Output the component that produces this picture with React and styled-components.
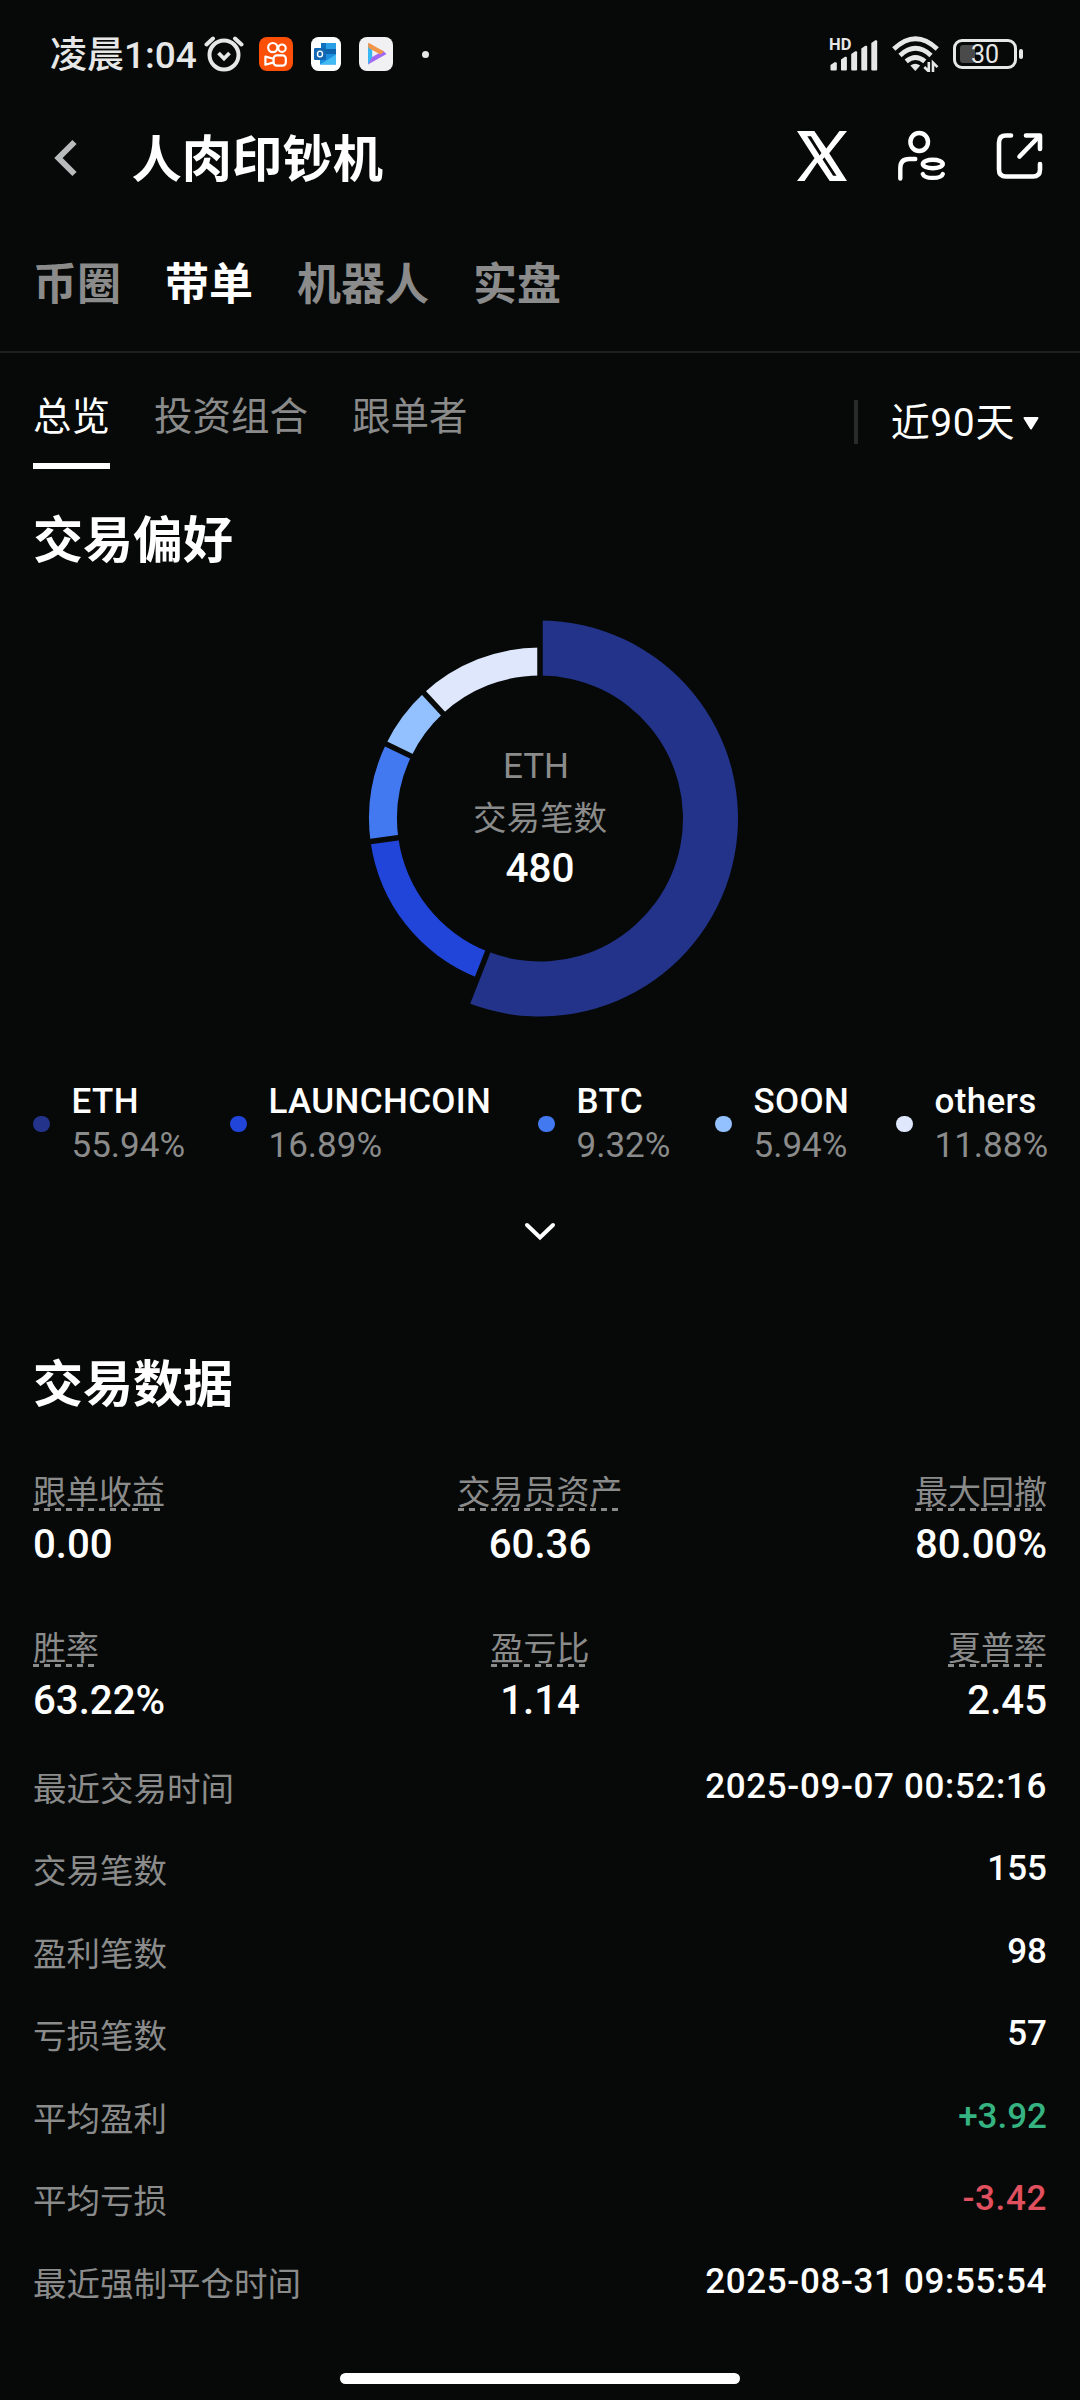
import React, { useState } from 'react';
import styled, { createGlobalStyle } from 'styled-components';

const slices = [
  { name: 'ETH', percent: 55.94, color: '#223389', active: true },
  { name: 'LAUNCHCOIN', percent: 16.89, color: '#2145d9' },
  { name: 'BTC', percent: 9.32, color: '#4279f0' },
  { name: 'SOON', percent: 5.94, color: '#93c0fe' },
  { name: 'others', percent: 11.88, color: '#dfe7fd' },
];

const stats = [
  { label: '跟单收益', value: '0.00' },
  { label: '交易员资产', value: '60.36' },
  { label: '最大回撤', value: '80.00%' },
  { label: '胜率', value: '63.22%' },
  { label: '盈亏比', value: '1.14' },
  { label: '夏普率', value: '2.45' },
];

const details = [
  { label: '最近交易时间', value: '2025-09-07 00:52:16' },
  { label: '交易笔数', value: '155' },
  { label: '盈利笔数', value: '98' },
  { label: '亏损笔数', value: '57' },
  { label: '平均盈利', value: '+3.92', color: '#35b380' },
  { label: '平均亏损', value: '-3.42', color: '#e0505f' },
  { label: '最近强制平仓时间', value: '2025-08-31 09:55:54' },
];

const mainTabs = ['币圈', '带单', '机器人', '实盘'];
const subTabs = ['总览', '投资组合', '跟单者'];

const CENTER = 200.5;
const INNER = 143;

const point = (angle, r) => {
  const rad = ((angle - 90) * Math.PI) / 180;
  return `${(200 + r * Math.cos(rad)).toFixed(2)} ${(CENTER + r * Math.sin(rad)).toFixed(2)}`;
};

const ringPath = (start, end, outer) => {
  const large = end - start > 180 ? 1 : 0;
  return `M${point(start, outer)} A${outer} ${outer} 0 ${large} 1 ${point(end, outer)} L${point(end, INNER)} A${INNER} ${INNER} 0 ${large} 0 ${point(start, INNER)} Z`;
};

const DonutChart = () => {
  const total = slices.reduce((sum, s) => sum + s.percent, 0);
  let angle = 0;
  const arcs = slices.map((s) => {
    const start = angle;
    angle += (s.percent / total) * 360;
    return { ...s, start, end: angle };
  });

  return (
    <svg width="400" height="400" viewBox="0 0 400 400">
      {arcs.map((a) => (
        <path key={a.name} d={ringPath(a.start, a.end, a.active ? 198 : 171)} fill={a.color} />
      ))}
      {arcs.map((a) => (
        <path
          key={a.name}
          d={`M${point(a.start, 138)} L${point(a.start, 202)}`}
          stroke="#060908"
          strokeWidth="5.5"
        />
      ))}
    </svg>
  );
};

const AlarmIcon = () => (
  <svg width="40" height="38" viewBox="0 0 40 38" fill="none" stroke="#e6e7e6" strokeLinecap="round">
    <circle cx="20" cy="20" r="14.5" strokeWidth="4" />
    <path d="M14.5 18l5.5 5.5 5.5-5.5" strokeWidth="3.8" strokeLinecap="butt" />
    <path d="M2.5 9.5l6.5-6M37.5 9.5L31 3.5" strokeWidth="4" />
  </svg>
);

const KuaishouIcon = () => (
  <svg width="34" height="34" viewBox="0 0 34 34">
    <rect width="34" height="34" rx="8" fill="#fc4f08" />
    <g fill="none" stroke="#fff" strokeWidth="2.2" strokeLinejoin="round">
      <circle cx="13.8" cy="10.6" r="4.6" />
      <circle cx="23" cy="11.2" r="3.7" />
      <rect x="14.6" y="18.3" width="12.2" height="10.3" rx="3.2" />
      <path d="M14.6 21.8l-8.2-2.2v8.2l8.2-2.4" />
    </g>
  </svg>
);

const OutlookIcon = () => (
  <svg width="30" height="34" viewBox="0 0 30 34">
    <rect width="30" height="34" rx="7.5" fill="#fdfefe" />
    <rect x="10" y="6" width="15" height="11" fill="#1071bd" />
    <rect x="15" y="6" width="10" height="6" fill="#2b9fe6" />
    <rect x="15" y="12" width="10" height="5" fill="#0e63ad" />
    <path d="M9 17h16v10.5H9z" fill="#1a8fe0" />
    <path d="M9 27.5l16-10v10z" fill="#42baf2" />
    <rect x="3" y="11" width="12" height="12" rx="1.2" fill="#1468b3" />
    <ellipse cx="9" cy="17" rx="2.5" ry="2.9" fill="none" stroke="#fff" strokeWidth="1.4" />
  </svg>
);

const VideoIcon = () => (
  <svg width="34" height="34" viewBox="0 0 34 34">
    <rect width="34" height="34" rx="8" fill="#f1f1f3" />
    <path d="M9 6.5L13.2 11v11.5L9 27.5z" fill="#38b6f1" />
    <path d="M9 27.5l4.2-7.5 7-4 3.5-2.5 3.8 3.5z" fill="#a268f2" />
    <path d="M9 6.5q.5-.8 1.5-.3L25 14.5l-3.5 3L9.500 11z" fill="#f2944a" />
  </svg>
);

const SignalIcon = () => (
  <svg width="48" height="31" viewBox="0 0 48 31" fill="#e6e7e6">
    <path d="M.5 25l4-2.8h1.3q1 0 1 1v6.4q0 1-1 1H1.5q-1 0-1-1z" />
    <path d="M11 19.5l4-2.8h.9q1 0 1 1v11.9q0 1-1 1H12q-1 0-1-1z" />
    <path d="M21.2 14l4-2.8h.9q1 0 1 1v17.4q0 1-1 1h-3.9q-1 0-1-1z" />
    <path d="M31.3 8.5l4-2.8h.9q1 0 1 1v22.9q0 1-1 1h-3.9q-1 0-1-1z" />
    <path d="M41.3 3l4-2.8h.9q1 0 1 1v28.4q0 1-1 1h-3.9q-1 0-1-1z" />
  </svg>
);

const WifiIcon = () => (
  <svg width="47" height="36" viewBox="0 0 47 36">
    <g fill="none" stroke="#e6e7e6" strokeWidth="4.8">
      <path d="M1.8 13Q23.5-7.5 45.2 13" />
      <path d="M8 19.4Q23.5 5.2 39 19.4" />
      <path d="M14.2 25.4Q23.5 17.5 32.8 25.4" />
    </g>
    <path d="M18.3 29.5q5-3.6 9.9 0L23.3 35z" fill="#e6e7e6" />
    <path d="M36.8 26v9.5l-4.5-4.5M41 36v-9.3l4.5 4.5" fill="none" stroke="#e6e7e6" strokeWidth="2.6" />
  </svg>
);

const BackIcon = () => (
  <svg width="24" height="38" viewBox="0 0 24 38" fill="none" stroke="#b9bcbd" strokeWidth="6">
    <path d="M20.5 3L4.5 19l16 16" />
  </svg>
);

const XIcon = () => (
  <svg width="50" height="50" viewBox="0 0 50 50">
    <path
      fill="#fff"
      fillRule="evenodd"
      d="M0 0h17.3l12 17.6L42.5 0H50L32.2 22.2 50 50H32.7L20.3 31.4 7.5 50H0l17.5-22.8zM10.3 5.2l12.4 19.200 1.700-2.400L14 5.2zM27.400 26.200l-1.800 2.300L36.100 44.8h3.5z"
    />
  </svg>
);

const TraderIcon = () => (
  <svg width="48" height="52" viewBox="0 0 48 52" fill="none" stroke="#fff" strokeWidth="4.4" strokeLinecap="round">
    <ellipse cx="21.2" cy="12" rx="8.8" ry="9" />
    <path d="M2.3 48.5V38q0-9 9-9h6" />
    <ellipse cx="34.8" cy="34" rx="10" ry="4.2" />
    <path d="M24.8 44c1.5 5.2 18.5 5.2 20 0" />
  </svg>
);

const ShareIcon = () => (
  <svg width="48" height="48" viewBox="0 0 48 48" fill="none" stroke="#fff" strokeWidth="4.6" strokeLinecap="round">
    <path d="M15 3.5H10q-7 0-7 7V37.5q0 7 7 7h27q7 0 7-7V32" />
    <path d="M30 3.5h14V17" strokeLinejoin="round" />
    <path d="M42.5 5L23.5 24.5" />
  </svg>
);

const App = () => {
  const [tab, setTab] = useState('带单');
  const [subTab, setSubTab] = useState('总览');

  return (
    <Screen lang="zh-CN">
      <GlobalStyle />
      <StatusBar>
        <Clock>凌晨1:04</Clock>
        <AlarmIcon />
        <Notifications>
          <KuaishouIcon />
          <OutlookIcon />
          <VideoIcon />
          <MoreDot />
        </Notifications>
        <Signal>
          <Hd>HD</Hd>
          <SignalIcon />
        </Signal>
        <WifiIcon />
        <Battery>
          <BatteryBody>
            <BatteryFill />
            <BatteryText>30</BatteryText>
          </BatteryBody>
          <BatteryTip />
        </Battery>
      </StatusBar>

      <Header>
        <Back>
          <BackIcon />
        </Back>
        <Title>人肉印钞机</Title>
        <Actions>
          <XIcon />
          <TraderIcon />
          <ShareIcon />
        </Actions>
      </Header>

      <MainTabs>
        {mainTabs.map((name) => (
          <MainTab key={name} $active={name === tab} onClick={() => setTab(name)}>
            {name}
          </MainTab>
        ))}
      </MainTabs>

      <SubTabs>
        {subTabs.map((name) => (
          <SubTab key={name} $active={name === subTab} onClick={() => setSubTab(name)}>
            {name}
          </SubTab>
        ))}
        <Range>
          近90天
          <svg width="16" height="14" viewBox="0 0 16 14">
            <path d="M1.5 2h13L8 12.5z" fill="#fff" stroke="#fff" strokeWidth="2" strokeLinejoin="round" />
          </svg>
        </Range>
      </SubTabs>

      <SectionTitle $top={42}>交易偏好</SectionTitle>
      <Chart>
        <DonutChart />
        <ChartCenter>
          <CenterName>ETH</CenterName>
          <CenterLabel>交易笔数</CenterLabel>
          <CenterValue>480</CenterValue>
        </ChartCenter>
      </Chart>

      <Legend>
        {slices.map((s) => (
          <LegendItem key={s.name}>
            <Dot $color={s.color} />
            <div>
              <LegendName>{s.name}</LegendName>
              <LegendPercent>{s.percent}%</LegendPercent>
            </div>
          </LegendItem>
        ))}
      </Legend>
      <Expand>
        <svg width="36" height="24" viewBox="0 0 36 24" fill="none" stroke="#fff" strokeWidth="4" strokeLinecap="round">
          <path d="M5 6l13 12.5L31 6" />
        </svg>
      </Expand>

      <SectionTitle $top={112}>交易数据</SectionTitle>
      <StatGrid>
        {stats.map((s) => (
          <Stat key={s.label}>
            <StatLabel>{s.label}</StatLabel>
            <StatValue>{s.value}</StatValue>
          </Stat>
        ))}
      </StatGrid>

      <DetailList>
        {details.map((d) => (
          <DetailRow key={d.label}>
            <DetailLabel>{d.label}</DetailLabel>
            <DetailValue $color={d.color} $wide={d.value.includes('-')}>
              {d.value}
            </DetailValue>
          </DetailRow>
        ))}
      </DetailList>
      <HomeIndicator />
    </Screen>
  );
};

const GlobalStyle = createGlobalStyle`
  body {
    margin: 0;
    background: #060908;
  }

  * {
    box-sizing: border-box;
  }

  svg {
    display: block;
    flex-shrink: 0;
  }
`;

const Screen = styled.div`
  width: 1080px;
  height: 2400px;
  overflow: hidden;
  background: #060908;
  color: #fff;
  font-family: Roboto, 'Noto Sans CJK SC', sans-serif;
  white-space: nowrap;
`;

const StatusBar = styled.div`
  display: flex;
  align-items: center;
  height: 108px;
  padding: 0 57px 0 50px;
  color: #e6e7e6;
`;

const Clock = styled.div`
  width: 154px;
  padding-bottom: 4px;
  font-size: 37px;
  font-weight: 500;
`;

const Notifications = styled.div`
  display: flex;
  align-items: center;
  gap: 18px;
  margin-left: 15px;
`;

const MoreDot = styled.div`
  width: 7px;
  height: 7px;
  margin-left: 11px;
  border-radius: 50%;
  background: #e6e7e6;
`;

const Signal = styled.div`
  position: relative;
  margin: 2px 14px 0 auto;
`;

const Hd = styled.span`
  position: absolute;
  top: -3px;
  left: -1px;
  font-size: 16.5px;
  font-weight: 700;
  line-height: 16px;
`;

const Battery = styled.div`
  display: flex;
  align-items: center;
  gap: 2px;
  margin-left: 14px;
`;

const BatteryBody = styled.div`
  position: relative;
  display: flex;
  align-items: center;
  justify-content: center;
  width: 64px;
  height: 30px;
  border: 3px solid #e6e7e6;
  border-radius: 9px;
`;

const BatteryFill = styled.div`
  position: absolute;
  top: 3px;
  left: 4px;
  width: 15px;
  height: 18px;
  border-radius: 3px;
  background: #494a49;
`;

const BatteryText = styled.span`
  position: relative;
  padding-top: 1px;
  font-size: 25px;
  line-height: 24px;
`;

const BatteryTip = styled.div`
  width: 4px;
  height: 10px;
  border-radius: 2px;
  background: #e6e7e6;
`;

const Header = styled.div`
  display: flex;
  align-items: center;
  height: 96px;
  padding: 0 36px 0 54px;
`;

const Back = styled.div`
  padding-top: 4px;
`;

const Title = styled.h1`
  margin: 8px 0 0 53.5px;
  font-size: 50.3px;
  font-weight: 700;
  line-height: 60px;
`;

const Actions = styled.div`
  display: flex;
  align-items: center;
  gap: 50.5px;
  margin-left: auto;
`;

const MainTabs = styled.div`
  display: flex;
  gap: 44px;
  height: 149px;
  padding: 55px 33px 0;
  border-bottom: 2px solid #1d1f1e;
`;

const MainTab = styled.div`
  color: ${({ $active }) => ($active ? '#fff' : '#8a8b8a')};
  font-size: 44px;
  font-weight: 700;
  line-height: 52px;
`;

const SubTabs = styled.div`
  display: flex;
  align-items: flex-start;
  gap: 44px;
  padding: 0 41px 0 33px;
`;

const SubTab = styled.div`
  padding: 38px 0 20px;
  border-bottom: 6px solid ${({ $active }) => ($active ? '#fff' : 'transparent')};
  color: ${({ $active }) => ($active ? '#fff' : '#8a8b8a')};
  font-size: 38.5px;
  line-height: 52px;
`;

const Range = styled.div`
  display: flex;
  align-items: center;
  gap: 8px;
  height: 44px;
  margin: 47px 0 0 auto;
  padding: 1px 0 0 33px;
  border-left: 4px solid #292b2a;
  font-size: 39px;
  line-height: 48px;
  letter-spacing: 0.6px;
`;

const SectionTitle = styled.h2`
  margin: ${({ $top }) => $top}px 0 0 33px;
  font-size: 50px;
  font-weight: 700;
  line-height: 60px;
`;

const Chart = styled.div`
  position: relative;
  width: 400px;
  height: 400px;
  margin: 47px auto 0;
`;

const ChartCenter = styled.div`
  position: absolute;
  inset: 0;
  display: flex;
  flex-direction: column;
  align-items: center;
  padding-top: 123px;
`;

const CenterName = styled.div`
  padding-right: 8px;
  color: #8a8b8a;
  font-size: 35px;
  line-height: 52px;
`;

const CenterLabel = styled.div`
  padding-bottom: 2px;
  color: #8a8b8a;
  font-size: 33.5px;
  line-height: 51px;
`;

const CenterValue = styled.div`
  font-size: 40.5px;
  font-weight: 500;
  line-height: 44px;
`;

const Legend = styled.div`
  display: grid;
  grid-template-columns: 197px 308px 177px 181px 1fr;
  margin: 62px 33px 0;
  font-size: 35px;
  line-height: 44px;
`;

const LegendItem = styled.div`
  display: flex;
  align-items: center;
  gap: 22px;
`;

const Dot = styled.div`
  flex-shrink: 0;
  width: 16.5px;
  height: 16.5px;
  border-radius: 50%;
  background: ${({ $color }) => $color};
`;

const LegendName = styled.div`
  font-weight: 500;
  letter-spacing: 0.35px;
`;

const LegendPercent = styled.div`
  color: #8a8b8a;
`;

const Expand = styled.div`
  display: flex;
  justify-content: center;
  margin-top: 51px;
`;

const StatGrid = styled.div`
  display: grid;
  grid-template-columns: repeat(3, 1fr);
  row-gap: 64.5px;
  margin: 60.5px 33px 0;
`;

const Stat = styled.div`
  display: flex;
  flex-direction: column;
  align-items: center;
  gap: 12.5px;

  &:nth-child(3n + 1) {
    align-items: flex-start;
  }

  &:nth-child(3n) {
    align-items: flex-end;
  }
`;

const StatLabel = styled.div`
  padding-bottom: 2px;
  color: #8a8b8a;
  font-size: 33px;
  line-height: 33px;
  background: repeating-linear-gradient(90deg, #8a8b8a 0 6px, transparent 6px 11px) bottom / 100% 3px no-repeat;
`;

const StatValue = styled.div`
  font-size: 40.2px;
  font-weight: 500;
  line-height: 44px;
`;

const DetailList = styled.div`
  margin: 25.5px 33px 0;
`;

const DetailRow = styled.div`
  display: flex;
  align-items: center;
  justify-content: space-between;
  height: 82.5px;
`;

const DetailLabel = styled.div`
  padding-bottom: 7px;
  color: #8a8b8a;
  font-size: 33.5px;
`;

const DetailValue = styled.div`
  padding-bottom: 7px;
  color: ${({ $color }) => $color || '#fff'};
  font-size: 35px;
  font-weight: 500;
  letter-spacing: ${({ $wide }) => ($wide ? '0.65px' : '0')};
`;

const HomeIndicator = styled.div`
  width: 400px;
  height: 11px;
  margin: 47px auto 0;
  border-radius: 6px;
  background: #fff;
`;

export default App;
